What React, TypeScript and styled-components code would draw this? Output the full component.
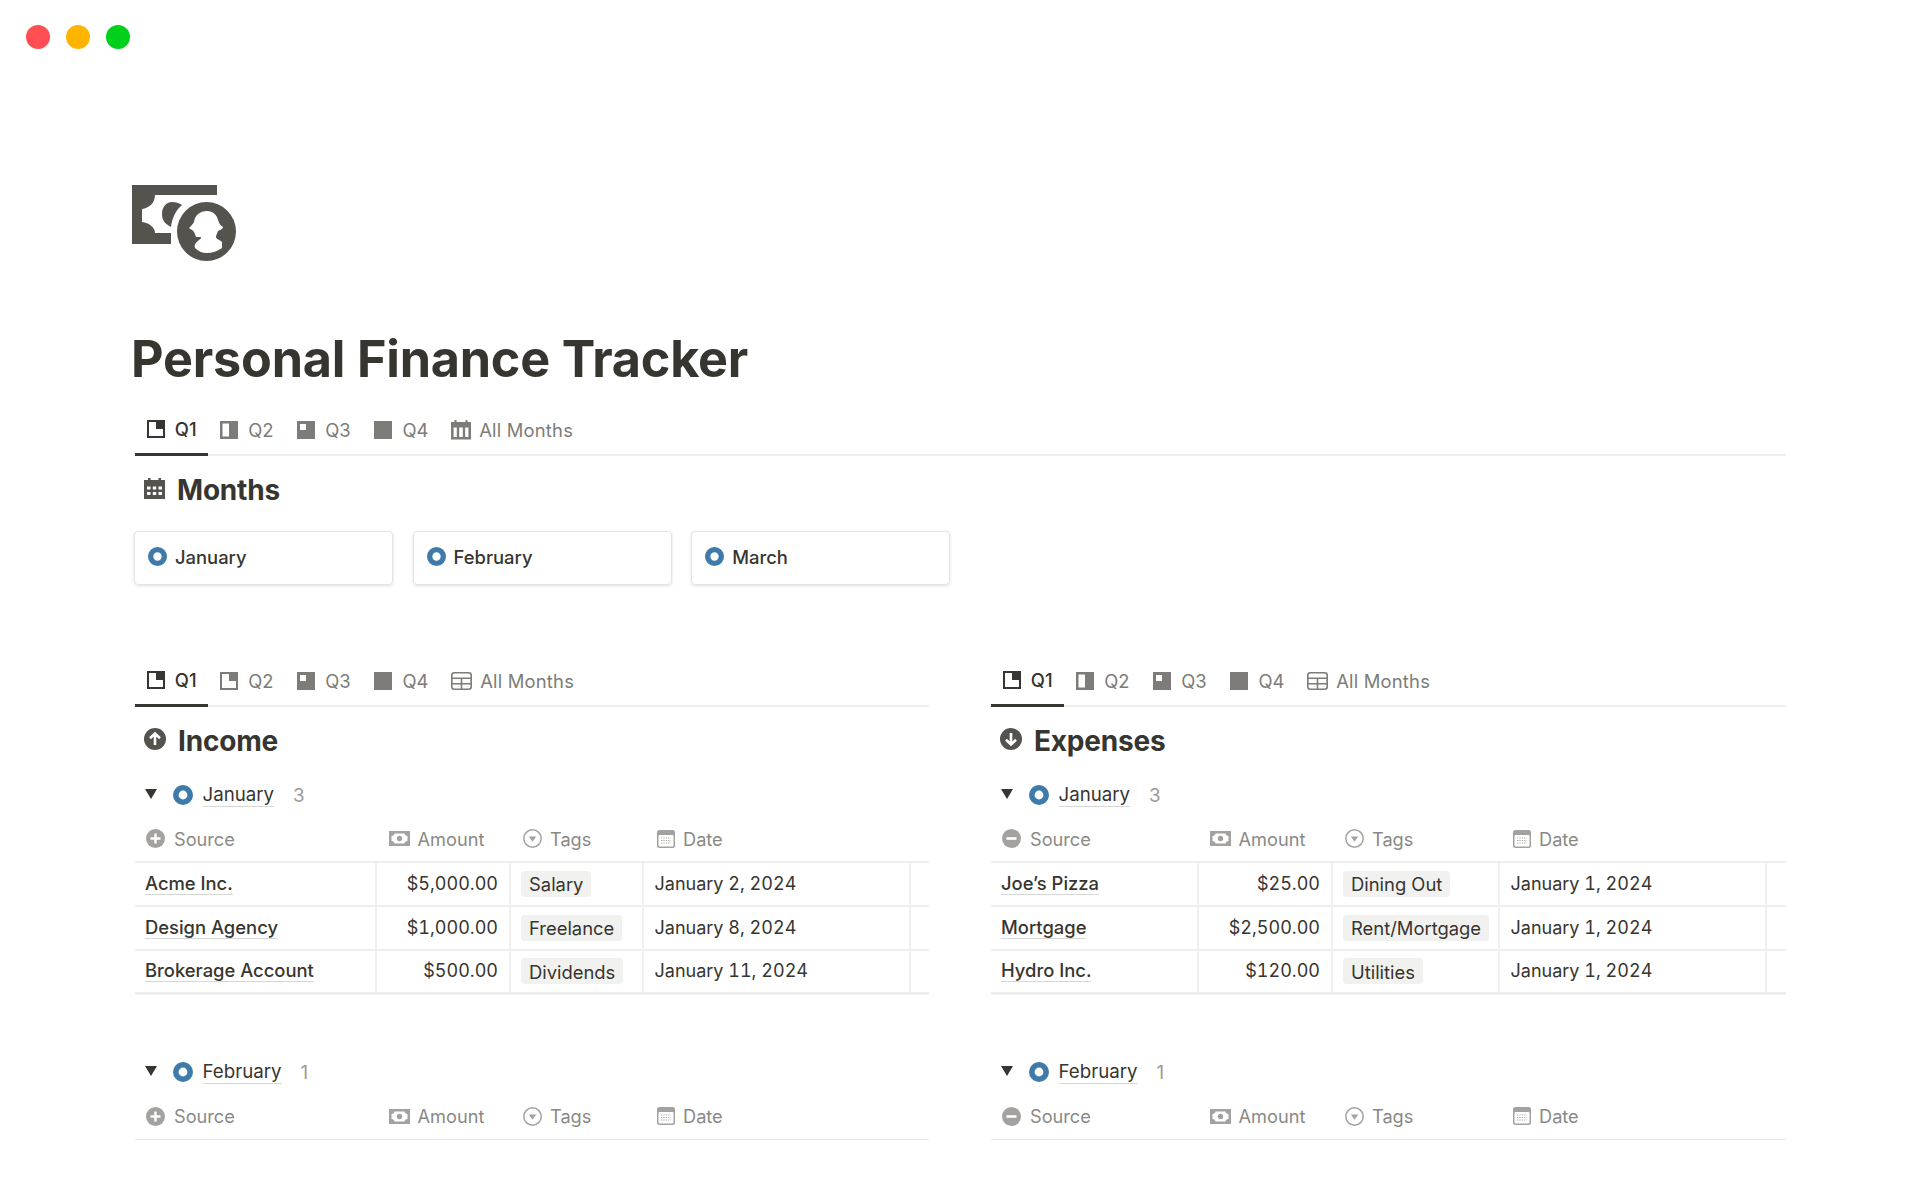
import React from "react";
import styled, { createGlobalStyle } from "styled-components";

const Global = createGlobalStyle`
  html, body { margin: 0; padding: 0; background: #fff; }
  body { font-family: Inter, "Liberation Sans", sans-serif; color: #37352f; -webkit-font-smoothing: antialiased; }
`;

const Page = styled.div`
  width: 1920px;
  height: 1200px;
  overflow: hidden;
  box-sizing: border-box;
`;
const WindowBar = styled.div`
  display: flex;
  gap: 16px;
  height: 73px;
  padding: 25px 0 0 26px;
  box-sizing: border-box;
`;
const Light = styled.span<{ $c: string }>`
  width: 24px;
  height: 24px;
  border-radius: 50%;
  background: ${(p) => p.$c};
`;
const Content = styled.main`
  padding-left: 132px;
  width: 1654px;
`;
const PageIcon = styled.svg`
  display: block;
  margin-top: 112px;
  width: 105px;
  height: 77px;
`;
const Title = styled.h1`
  margin: 68px 0 17px -1px;
  font-size: 50.3px;
  line-height: 58px;
  font-weight: 700;
  letter-spacing: -0.2px;
  color: #37352f;
`;
const Block = styled.section`
  margin-left: 3px;
`;
const TabBar = styled.div`
  display: flex;
  height: 51px;
  box-sizing: border-box;
  border-bottom: 2px solid #eeeeed;
`;
const Tab = styled.div<{ $active?: boolean }>`
  display: flex;
  align-items: center;
  gap: 10px;
  height: 51px;
  padding: 0 11.85px 1px;
  box-sizing: border-box;
  font-size: 18.4px;
  font-weight: ${(p) => (p.$active ? 500 : 400)};
  color: ${(p) => (p.$active ? "#37352f" : "#7d7c78")};
  border-bottom: ${(p) => (p.$active ? "3px solid #37352f" : "none")};
  svg { flex: none; display: block; }
`;
const AllTab = styled(Tab)`
  gap: 8px;
  padding-left: 11px;
  letter-spacing: 0.2px;
`;
const Heading = styled.h2`
  display: flex;
  align-items: center;
  gap: 12px;
  margin: 0;
  padding-left: 9px;
  height: 38px;
  font-size: 28px;
  font-weight: 700;
  letter-spacing: -0.2px;
  color: #37352f;
  svg { flex: none; margin-top: -4px; }
`;
const MonthsHeading = styled(Heading)`
  margin-top: 15px;
`;
const Cards = styled.div`
  display: flex;
  gap: 19.6px;
  margin-top: 22px;
  margin-left: -1px;
`;
const Card = styled.div`
  width: 259px;
  height: 54px;
  box-sizing: border-box;
  display: flex;
  align-items: center;
  gap: 8px;
  padding: 0 13px 3px;
  border: 1px solid #e4e4e2;
  border-radius: 4px;
  box-shadow: 0 1px 3px rgba(15, 15, 15, 0.13);
  font-size: 18.4px;
  font-weight: 500;
  color: #37352f;
`;
const Columns = styled.div`
  display: grid;
  grid-template-columns: 794px 795px;
  gap: 62px;
  margin-top: 71px;
`;
const Column = styled.div``;
const SectionHeading = styled(Heading)`
  margin-top: 15px;
`;
const GroupRow = styled.div<{ $top: number }>`
  display: flex;
  align-items: center;
  height: 30px;
  margin-top: ${(p) => p.$top}px;
  padding-left: 10px;
  font-size: 18.7px;
`;
const Caret = styled.span`
  width: 0;
  height: 0;
  border-left: 6.5px solid transparent;
  border-right: 6.5px solid transparent;
  border-top: 10px solid #37352f;
  margin-right: 16px;
  margin-top: -2px;
`;
const GroupName = styled.span`
  margin-left: 9.5px;
  font-weight: 400;
  line-height: 22px;
  border-bottom: 1px solid #d7d7d5;
  color: #37352f;
`;
const GroupCount = styled.span`
  margin-left: 19px;
  color: #9b9a97;
`;
const HeaderRow = styled.div<{ $cols: string; $open?: boolean }>`
  display: grid;
  grid-template-columns: ${(p) => p.$cols};
  height: 39px;
  margin-top: 14px;
  box-sizing: border-box;
  border-bottom: ${(p) => (p.$open ? "1px solid #e9e9e8" : "2px solid #eeeeed")};
`;
const HeaderCell = styled.div<{ $pad: number; $gap: number }>`
  display: flex;
  align-items: center;
  gap: ${(p) => p.$gap}px;
  padding-left: ${(p) => p.$pad}px;
  padding-bottom: 8px;
  font-size: 18.2px;
  color: #8a8985;
  svg { flex: none; }
`;
const Row = styled.div<{ $cols: string; $last?: boolean }>`
  display: grid;
  grid-template-columns: ${(p) => p.$cols};
  height: 44px;
  box-sizing: border-box;
  border-bottom: ${(p) => (p.$last ? "3px solid #eeeeed" : "2px solid #eeeeed")};
  font-size: 18.4px;
  color: #37352f;
`;
const Cell = styled.div`
  display: flex;
  align-items: center;
  box-sizing: border-box;
  border-right: 2px solid #f0f0ef;
  min-width: 0;
  padding-bottom: 1px;
`;
const NameCell = styled(Cell)`
  padding-left: 10px;
`;
const RowName = styled.span`
  font-weight: 500;
  line-height: 21px;
  border-bottom: 1px solid #d7d7d5;
`;
const AmountCell = styled(Cell)`
  justify-content: flex-end;
  padding: 0 11px 2px 0;
  font-size: 18px;
  font-variant-numeric: tabular-nums;
`;
const TagCell = styled(Cell)`
  padding-left: 10px;
`;
const Pill = styled.span`
  display: inline-flex;
  align-items: center;
  height: 26px;
  padding: 1px 8px 0;
  box-sizing: border-box;
  border-radius: 4px;
  background: #f1f1ef;
  white-space: nowrap;
`;
const DateCell = styled(Cell)`
  padding: 0 0 2px 10.5px;
  font-size: 18px;
  font-variant-numeric: tabular-nums;
`;
const EndCell = styled.div``;

const G = "#7d7c78";
const D = "#37352f";
const Quarter = ({ q, color }: { q: "tr" | "half" | "q3" | "full"; color: string }) => (
  <svg width="18" height="18" viewBox="0 0 18 18">
    {q === "full" && <rect width="18" height="18" fill={color} />}
    {q === "q3" && (
      <path fillRule="evenodd" d="M0 0H18V18H0ZM3 3V9H9V3Z" fill={color} />
    )}
    {q === "half" && (
      <path fillRule="evenodd" d="M0 0H18V18H0ZM2.5 2.5V15.5H9V2.5Z" fill={color} />
    )}
    {q === "tr" && (
      <path fillRule="evenodd" d="M0 0H18V18H0ZM2 2V16H16V9H9V2Z" fill={color} />
    )}
  </svg>
);
const CalendarColumns = () => (
  <svg width="20" height="20" viewBox="0 0 20 20">
    <path
      fillRule="evenodd"
      fill={G}
      d="M3.5 0H5.5V2H14.5V0H16.5V2H20V19.5H0V2H3.5ZM2.6 7.5V17H5.8V7.5ZM8.2 7.5V17H11.8V7.5ZM14.2 7.5V17H17.4V7.5Z"
    />
  </svg>
);
const TableIcon = () => (
  <svg width="21" height="18" viewBox="0 0 21 18" fill="none" stroke={G} strokeWidth="1.6">
    <rect x="0.8" y="0.8" width="19.4" height="16.4" rx="2.5" />
    <path d="M.8 6.3H20.2M.8 11.7H20.2M10.5 6.3V17.2" />
  </svg>
);
const CalendarSolid = () => (
  <svg width="21" height="21" viewBox="0 0 21 21">
    <path
      fillRule="evenodd"
      fill="#55534e"
      d="M4 0H6.5V2H14.5V0H17V2H21V21H0V2H4ZM3 8.5V11.5H6.5V8.5ZM8.8 8.5V11.5H12.2V8.5ZM14.5 8.5V11.5H18V8.5ZM3 14V17H6.5V14ZM8.8 14V17H12.2V14ZM14.5 14V17H18V14Z"
    />
  </svg>
);
const ArrowCircle = ({ down }: { down?: boolean }) => (
  <svg width="22" height="22" viewBox="0 0 22 22">
    <circle cx="11" cy="11" r="11" fill="#55534e" />
    <path
      d={down ? "M11 5V16.5M6 11.8L11 16.5L16 11.8" : "M11 17V5.5M6 10.2L11 5.5L16 10.2"}
      stroke="#fff"
      strokeWidth="2.6"
      fill="none"
    />
  </svg>
);
const Status = ({ size }: { size: number }) => (
  <svg width={size} height={size} viewBox="0 0 20 20">
    <circle cx="10" cy="10" r="7.2" fill="none" stroke="#3e7bab" strokeWidth="5.6" />
  </svg>
);
const HGrey = "#a3a2a0";
const PlusCircle = () => (
  <svg width="19" height="19" viewBox="0 0 19 19">
    <circle cx="9.5" cy="9.5" r="9.5" fill={HGrey} />
    <path d="M9.5 4.5V14.5M4.5 9.5H14.5" stroke="#fff" strokeWidth="2.4" />
  </svg>
);
const MinusCircle = () => (
  <svg width="19" height="19" viewBox="0 0 19 19">
    <circle cx="9.5" cy="9.5" r="9.5" fill={HGrey} />
    <path d="M4.5 9.5H14.5" stroke="#fff" strokeWidth="2.6" />
  </svg>
);
const Bill = () => (
  <svg width="21" height="15" viewBox="0 0 21 15">
    <path
      fillRule="evenodd"
      fill={HGrey}
      d="M0 0H21V15H0ZM5.5 2.5C5.5 4 4 5 2.5 5V10C4 10 5.5 11 5.5 12.5H15.5C15.5 11 17 10 18.5 10V5C17 5 15.5 4 15.5 2.5ZM10.5 4.8A2.7 2.7 0 1 1 10.5 10.2A2.7 2.7 0 1 1 10.5 4.8Z"
    />
  </svg>
);
const SelectIcon = () => (
  <svg width="19" height="19" viewBox="0 0 19 19">
    <circle cx="9.5" cy="9.5" r="8.7" fill="none" stroke={HGrey} strokeWidth="1.5" />
    <path d="M5.8 7.5H13.2L9.5 12.8Z" fill={HGrey} />
  </svg>
);
const DateIcon = () => (
  <svg width="18" height="18" viewBox="0 0 18 18">
    <rect x="0" y="0" width="18" height="18" rx="2.5" fill={HGrey} />
    <rect x="1.5" y="5" width="15" height="11.5" rx="1" fill="#fff" />
    <path
      d="M4 8H14M4 10.5H14M4 13H14"
      stroke={HGrey}
      strokeWidth="1.2"
      strokeDasharray="1.2 1.2"
    />
  </svg>
);

type Data = { name: string; amount: string; tag: string; date: string };
const income: Data[] = [
  { name: "Acme Inc.", amount: "$5,000.00", tag: "Salary", date: "January 2, 2024" },
  { name: "Design Agency", amount: "$1,000.00", tag: "Freelance", date: "January 8, 2024" },
  { name: "Brokerage Account", amount: "$500.00", tag: "Dividends", date: "January 11, 2024" },
];
const expenses: Data[] = [
  { name: "Joe’s Pizza", amount: "$25.00", tag: "Dining Out", date: "January 1, 2024" },
  { name: "Mortgage", amount: "$2,500.00", tag: "Rent/Mortgage", date: "January 1, 2024" },
  { name: "Hydro Inc.", amount: "$120.00", tag: "Utilities", date: "January 1, 2024" },
];

const Tabs = ({ q2, all }: { q2: "half" | "tr"; all: React.ReactNode }) => (
  <TabBar>
    <Tab $active>
      <Quarter q="tr" color={D} />
      Q1
    </Tab>
    <Tab>
      <Quarter q={q2} color={G} />
      Q2
    </Tab>
    <Tab>
      <Quarter q="q3" color={G} />
      Q3
    </Tab>
    <Tab>
      <Quarter q="full" color={G} />
      Q4
    </Tab>
    <AllTab>
      {all}
      All Months
    </AllTab>
  </TabBar>
);

const Header = ({
  cols,
  icon,
  open,
  pads,
}: {
  cols: string;
  icon: React.ReactNode;
  open?: boolean;
  pads: number[];
}) => (
  <HeaderRow $cols={cols} $open={open}>
    <HeaderCell $pad={pads[0]} $gap={9}>
      {icon}
      Source
    </HeaderCell>
    <HeaderCell $pad={pads[1]} $gap={7.5}>
      <Bill />
      Amount
    </HeaderCell>
    <HeaderCell $pad={pads[2]} $gap={8}>
      <SelectIcon />
      Tags
    </HeaderCell>
    <HeaderCell $pad={pads[3]} $gap={8}>
      <DateIcon />
      Date
    </HeaderCell>
  </HeaderRow>
);

const Section = ({
  title,
  down,
  cols,
  icon,
  data,
  pads,
}: {
  title: string;
  down?: boolean;
  cols: string;
  icon: React.ReactNode;
  data: Data[];
  pads: number[];
}) => (
  <Column>
    <Tabs q2={down ? "half" : "tr"} all={<TableIcon />} />
    <SectionHeading>
      <ArrowCircle down={down} />
      {title}
    </SectionHeading>
    <GroupRow $top={20}>
      <Caret />
      <Status size={20} />
      <GroupName>January</GroupName>
      <GroupCount>3</GroupCount>
    </GroupRow>
    <Header cols={cols} icon={icon} pads={pads} />
    {data.map((d, i) => (
      <Row key={d.name} $cols={cols} $last={i === data.length - 1}>
        <NameCell>
          <RowName>{d.name}</RowName>
        </NameCell>
        <AmountCell>{d.amount}</AmountCell>
        <TagCell>
          <Pill>{d.tag}</Pill>
        </TagCell>
        <DateCell>{d.date}</DateCell>
        <EndCell />
      </Row>
    ))}
    <GroupRow $top={62}>
      <Caret />
      <Status size={20} />
      <GroupName>February</GroupName>
      <GroupCount>1</GroupCount>
    </GroupRow>
    <Header cols={cols} icon={icon} pads={pads} open />
  </Column>
);

export default function App() {
  return (
    <Page>
      <Global />
      <WindowBar>
        <Light $c="#ff4f52" />
        <Light $c="#ffb400" />
        <Light $c="#00cf1c" />
      </WindowBar>
      <Content>
        <PageIcon viewBox="0 0 105 77">
          <path
            fill="#55534e"
            d="M0 0H85V10H23C23 18 17 23 10 24V37C17 38 23 42 23 48H39V59H0Z"
          />
          <path
            fill="#55534e"
            d="M40 17C44 17 47 18 50 20C44 25 40 33 39 42C33 39 30 35 30 29C30 22 34 17 40 17Z"
          />
          <circle cx="74.5" cy="46.5" r="29.5" fill="#55534e" />
          <path
            fill="#fff"
            d="M75 26C81 26 85 30 86 35C87 38 88 40 91 42C90.5 45 87 45 86 46C85 49 84 50 84 52C84 54 88 55 90 57C90 59 90 62 90 63C86 66 80 68 75 68C70 68 66 66 63 63C62 60 63 58 66 56C68 54 69 54 69 52L64 52C63 49 62 46 60 45L57 43C59 41 61 39 62 37C63 30 68 26 75 26Z"
          />
        </PageIcon>
        <Title>Personal Finance Tracker</Title>
        <Block>
          <Tabs q2="half" all={<CalendarColumns />} />
          <MonthsHeading>
            <CalendarSolid />
            Months
          </MonthsHeading>
          <Cards>
            {["January", "February", "March"].map((m) => (
              <Card key={m}>
                <Status size={19} />
                {m}
              </Card>
            ))}
          </Cards>
          <Columns>
            <Section
              title="Income"
              cols="242px 134px 133px 267px 18px"
              icon={<PlusCircle />}
              data={income}
              pads={[11, 12, 12, 13]}
            />
            <Section
              title="Expenses"
              down
              cols="208px 134px 167px 267px 19px"
              icon={<MinusCircle />}
              data={expenses}
              pads={[11, 11, 12, 13]}
            />
          </Columns>
        </Block>
      </Content>
    </Page>
  );
}
